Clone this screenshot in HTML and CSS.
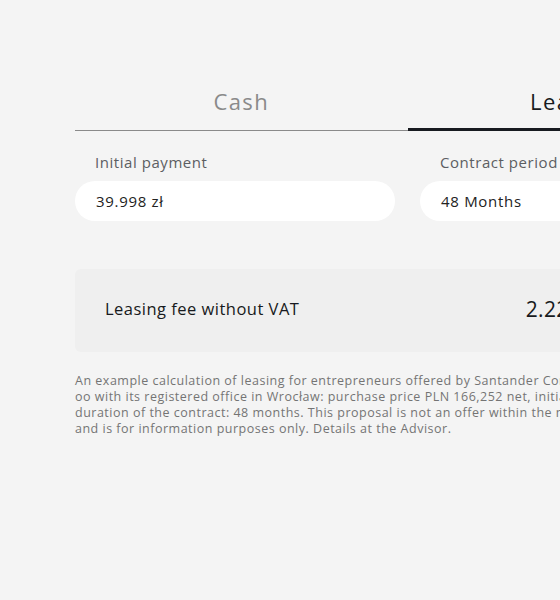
FILE: index.html
```html
<!DOCTYPE html>
<html lang="en">
<head>
<meta charset="utf-8">
<title>Leasing calculator</title>
<link rel="stylesheet" href="styles.css">
</head>
<body>
<main class="calc">
  <div class="tabs">
    <div class="tab">Cash</div>
    <div class="tab tab-active">Leasing</div>
  </div>
  <div class="fields">
    <div class="field">
      <div class="label">Initial payment</div>
      <div class="input">39.998 zł</div>
    </div>
    <div class="field">
      <div class="label">Contract period</div>
      <div class="input">48 Months</div>
    </div>
  </div>
  <div class="fee">
    <div class="fee-label">Leasing fee without VAT</div>
    <div class="fee-value">2.227 zł</div>
  </div>
  <p class="note">An example calculation of leasing for entrepreneurs offered by Santander Consumer Multirent Sp. z<br>oo with its registered office in Wrocław: purchase price PLN 166,252 net, initial payment PLN 39,998,<br>duration of the contract: 48 months. This proposal is not an offer within the meaning of the Civil Code<br>and is for information purposes only. Details at the Advisor.</p>
</main>
</body>
</html>
```
FILE: styles.css
```css
html, body {
  margin: 0;
  padding: 0;
  overflow: hidden;
  background: #f4f4f4;
}
body {
  font-family: "Open Sans", "Liberation Sans", sans-serif;
  font-weight: 500;
  color: #171a20;
}
.calc {
  width: 665px;
  margin-left: 75px;
  padding-top: 86px;
}
.tabs {
  display: flex;
  align-items: flex-end;
}
.tab {
  flex: 1;
  text-align: center;
  font-size: 22px;
  line-height: 30px;
  letter-spacing: 1.4px;
  color: #8a8a8a;
  padding-bottom: 14px;
  border-bottom: 1px solid #8a8a8a;
}
.tab-active {
  color: #171a20;
  padding-bottom: 12px;
  border-bottom: 3px solid #171a20;
}
.fields {
  display: grid;
  grid-template-columns: 1fr 1fr;
  column-gap: 25px;
  margin-top: 21px;
}
.label {
  font-size: 15px;
  line-height: 20px;
  letter-spacing: 0.55px;
  color: #5c5e62;
  padding-left: 20px;
  margin-bottom: 9px;
}
.input {
  background: #fff;
  height: 40px;
  border-radius: 20px;
  padding-left: 21px;
  font-size: 15px;
  line-height: 40px;
  letter-spacing: 0.7px;
  color: #222;
}
.fee {
  margin-top: 48px;
  height: 83px;
  box-sizing: border-box;
  background: #efefef;
  border-radius: 6px;
  display: flex;
  align-items: center;
  justify-content: space-between;
  padding: 0 137px 4px 30px;
}
.fee-label {
  font-size: 16.5px;
  letter-spacing: 0.48px;
  color: #171a20;
}
.fee-value {
  font-size: 21px;
  letter-spacing: 0.4px;
  color: #171a20;
}
.note {
  margin: 21px 0 0;
  font-size: 12.5px;
  line-height: 16px;
  letter-spacing: 0.5px;
  color: #747474;
  white-space: nowrap;
}
```
